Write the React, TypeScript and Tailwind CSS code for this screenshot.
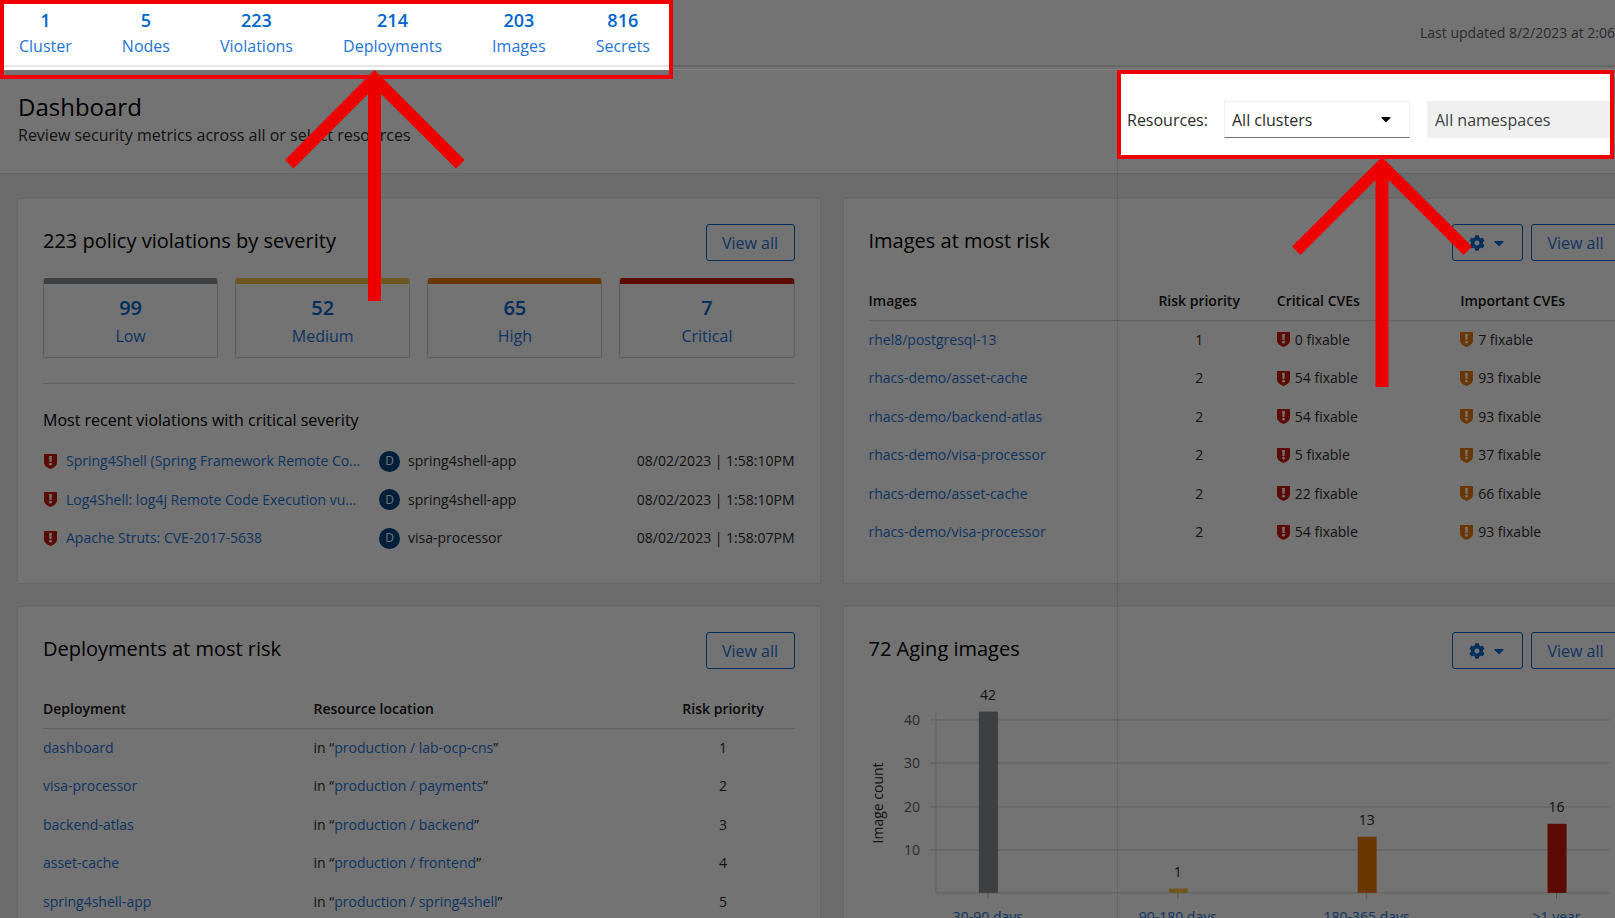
import React from "react";
import { FaCaretDown, FaCog } from "react-icons/fa";

const stats = [
  ["1", "Cluster"],
  ["5", "Nodes"],
  ["223", "Violations"],
  ["214", "Deployments"],
  ["203", "Images"],
  ["816", "Secrets"],
];

const severities = [
  { count: 99, label: "Low", bar: "bg-[#8a8d90]" },
  { count: 52, label: "Medium", bar: "bg-[#f4c145]" },
  { count: 65, label: "High", bar: "bg-[#ec7a08]" },
  { count: 7, label: "Critical", bar: "bg-[#c9190b]" },
];

const violations = [
  { name: "Spring4Shell (Spring Framework Remote Co...", app: "spring4shell-app", time: "08/02/2023 | 1:58:10PM" },
  { name: "Log4Shell: log4j Remote Code Execution vu...", app: "spring4shell-app", time: "08/02/2023 | 1:58:10PM" },
  { name: "Apache Struts: CVE-2017-5638", app: "visa-processor", time: "08/02/2023 | 1:58:07PM" },
];

const images = [
  { name: "rhel8/postgresql-13", priority: 1, critical: 0, important: 7 },
  { name: "rhacs-demo/asset-cache", priority: 2, critical: 54, important: 93 },
  { name: "rhacs-demo/backend-atlas", priority: 2, critical: 54, important: 93 },
  { name: "rhacs-demo/visa-processor", priority: 2, critical: 5, important: 37 },
  { name: "rhacs-demo/asset-cache", priority: 2, critical: 22, important: 66 },
  { name: "rhacs-demo/visa-processor", priority: 2, critical: 54, important: 93 },
];

const deployments = [
  { name: "dashboard", location: "production / lab-ocp-cns" },
  { name: "visa-processor", location: "production / payments" },
  { name: "backend-atlas", location: "production / backend" },
  { name: "asset-cache", location: "production / frontend" },
  { name: "spring4shell-app", location: "production / spring4shell" },
];

const ages = [
  { label: "30-90 days", count: 42, x: 119, fill: "fill-[#8a8d90]" },
  { label: "90-180 days", count: 1, x: 309, fill: "fill-[#f4c145]" },
  { label: "180-365 days", count: 13, x: 498, fill: "fill-[#ec7a08]" },
  { label: ">1 year", count: 16, x: 688, fill: "fill-[#c9190b]" },
];

function Shield({ className }: { className: string }) {
  return (
    <svg viewBox="0 0 13 15" className={`h-[15px] w-[13px] shrink-0 ${className}`} aria-hidden="true">
      <path
        fill="currentColor"
        d="M.6 0h11.8c.3 0 .6.3.6.6v7.9c0 2.9-2.400 4.900-6.500 6.500C2.400 13.400 0 11.400 0 8.500V.6C0 .3.3 0 .6 0z"
      />
      <path fill="#fff" d="M5.100 2h2.800l-.4 6H5.500z" />
      <circle cx="6.500" cy="10.200" r="1.400" fill="#fff" />
    </svg>
  );
}

function ViewAll() {
  return (
    <button type="button" className="h-[37px] w-[89px] rounded-[3px] border border-[#0066cc] text-base text-[#1f75d8]">
      View all
    </button>
  );
}

function OptionsButton() {
  return (
    <button
      type="button"
      aria-label="Options"
      className="flex h-[37px] w-[71px] items-center justify-center gap-[6px] rounded-[3px] border border-[#0066cc] text-base text-[#0066cc]"
    >
      <FaCog />
      <FaCaretDown />
    </button>
  );
}

function Card({ title, options, children }: { title: string; options?: boolean; children: React.ReactNode }) {
  return (
    <section className="min-h-[384px] bg-white p-[25px] shadow-[0_0_2px_rgba(3,3,3,0.15)]">
      <div className="flex items-start justify-between">
        <h2 className="text-xl leading-[34px] font-medium text-black">{title}</h2>
        <div className="flex gap-2">
          {options && <OptionsButton />}
          <ViewAll />
        </div>
      </div>
      {children}
    </section>
  );
}

function Fixable({ count, tone }: { count: number; tone: string }) {
  return (
    <span className="flex items-center gap-[5px]">
      <Shield className={tone} />
      {count} fixable
    </span>
  );
}

function AgingChart() {
  const base = 224;
  const unit = 4.32;
  return (
    <svg viewBox="0 0 752 270" className="block h-auto w-full text-sm" role="img" aria-label="Image count by age">
      {[10, 20, 30, 40].map((v) => {
        const y = Math.round(base - v * unit);
        return (
          <g key={v}>
            <path d={`M61 ${y}H741`} className="stroke-[#d2d2d2]" />
            <text x="51" y={y + 5} textAnchor="end" className="fill-[#5f6265]">
              {v}
            </text>
          </g>
        );
      })}
      <path d={`M67 42V${base}H741`} fill="none" className="stroke-[#d2d2d2]" />
      <text transform="translate(14 134) rotate(-90)" textAnchor="middle" className="fill-[#2b2b2b]">
        Image count
      </text>
      {ages.map((a) => {
        const top = base - a.count * unit;
        return (
          <g key={a.label}>
            <path d={`M${a.x} ${base}v6`} className="stroke-[#b8bbbe]" />
            <rect x={a.x - 9} y={top} width="19" height={a.count * unit} className={a.fill} />
            <text x={a.x} y={top - 12} textAnchor="middle" className="fill-[#2b2b2b]">
              {a.count}
            </text>
            <a href="#aging">
              <text x={a.x} y="253" textAnchor="middle" className="fill-[#1f75d8]">
                {a.label}
              </text>
            </a>
          </g>
        );
      })}
    </svg>
  );
}

export default function App() {
  return (
    <div className="relative h-screen overflow-hidden bg-[#f0f0f0] font-['Open_Sans',sans-serif] text-[#2b2b2b]">
      <header className="flex h-[70px] justify-between bg-white">
        <nav aria-label="Summary" className="relative z-20 flex w-[673px] shrink-0 bg-white">
          <ul className="mb-[3px] flex flex-1 justify-between border-b-2 border-[#e4e4e4] pt-[7px] pr-[23px] pl-[19px]">
            {stats.map(([count, label]) => (
              <li key={label}>
                <a href={`#${label}`} className="block text-center text-base leading-[26px] text-[#1f75d8]">
                  <span className="block text-lg leading-[26px] font-semibold text-[#0066cc]">{count}</span>
                  {label}
                </a>
              </li>
            ))}
          </ul>
          <div className="pointer-events-none absolute inset-x-0 top-0 h-[79px] border-4 border-[#ee0000]" />
        </nav>
        <p className="mb-[3px] flex flex-1 justify-end border-b-2 border-[#e4e4e4] text-sm leading-[65px] whitespace-nowrap text-[#5f6265]">
          Last updated 8/2/2023 at 2:06
        </p>
      </header>

      <div className="flex h-[104px] items-start justify-between border-b border-[#e0e0e0] bg-white pr-px">
        <div className="pt-[19px] pl-[18px]">
          <h1 className="text-2xl leading-9 font-medium text-black">Dashboard</h1>
          <p className="text-base leading-5">Review security metrics across all or select resources</p>
        </div>
        <form className="relative z-20 flex h-[89px] w-[497px] items-center overflow-hidden border-4 border-[#ee0000] bg-white pt-[14px] pb-1 pl-[6px]">
          <label htmlFor="clusters" className="w-[97px] shrink-0 text-base">
            Resources:
          </label>
          <div className="relative mr-[17px] w-[186px] shrink-0">
            <select
              id="clusters"
              className="block h-[37px] w-full appearance-none border border-b-[#6a6e73] border-[#f0f0f0] bg-white px-[7px] text-base"
            >
              <option>All clusters</option>
            </select>
            <FaCaretDown className="pointer-events-none absolute top-[10px] right-4 text-black" />
          </div>
          <select
            disabled
            aria-label="Namespaces"
            className="block h-[37px] flex-1 appearance-none bg-[#f0f0f0] px-2 text-base text-[#3c3f42] opacity-100"
          >
            <option>All namespaces</option>
          </select>
        </form>
      </div>

      <main className="-mr-[54px] grid grid-cols-2 gap-6 py-[25px] pr-6 pl-[18px]">
        <Card title="223 policy violations by severity">
          <ul className="mt-[17px] grid grid-cols-4 gap-[17px]">
            {severities.map((s) => (
              <li key={s.label} className="h-20 overflow-hidden rounded-[3px] border border-t-0 border-[#d2d2d2]">
                <div className={`h-[6px] ${s.bar}`} />
                <a href={`#${s.label}`} className="block pt-[10px] text-center text-base leading-7 text-[#1f75d8]">
                  <span className="block text-xl leading-7 font-semibold text-[#0066cc]">{s.count}</span>
                  {s.label}
                </a>
              </li>
            ))}
          </ul>
          <hr className="mt-[25px] border-[#d2d2d2]" />
          <h3 className="mt-6 mb-[10px] text-base leading-6 font-medium text-black">
            Most recent violations with critical severity
          </h3>
          <ul className="text-sm">
            {violations.map((v) => (
              <li key={v.name} className="flex items-center pl-px odd:h-[38px] even:h-[39px]">
                <Shield className="text-[#c9190b]" />
                <a href="#violation" className="mr-[17px] ml-[9px] w-[296px] whitespace-nowrap text-[#1f75d8]">
                  {v.name}
                </a>
                <span className="mr-2 flex size-[21px] items-center justify-center rounded-full bg-[#004080] text-xs text-white">
                  D
                </span>
                {v.app}
                <time className="ml-auto">{v.time}</time>
              </li>
            ))}
          </ul>
        </Card>

        <Card title="Images at most risk" options>
          <table className="mt-[21px] w-full table-fixed text-left text-sm">
            <thead>
              <tr className="h-[38px] border-b border-[#d2d2d2] text-[#151515]">
                <th className="w-[35%] font-semibold">Images</th>
                <th className="w-[18%] text-center font-semibold">Risk priority</th>
                <th className="w-[24%] pl-[10px] font-semibold">Critical CVEs</th>
                <th className="pl-[13px] font-semibold">Important CVEs</th>
              </tr>
            </thead>
            <tbody>
              {images.map((r, i) => (
                <tr key={i} className="odd:h-[39px] even:h-[38px]">
                  <td>
                    <a href="#image" className="text-[#1f75d8]">
                      {r.name}
                    </a>
                  </td>
                  <td className="text-center">{r.priority}</td>
                  <td className="pl-[10px]">
                    <Fixable count={r.critical} tone="text-[#c9190b]" />
                  </td>
                  <td className="pl-[13px]">
                    <Fixable count={r.important} tone="text-[#ec7a08]" />
                  </td>
                </tr>
              ))}
            </tbody>
          </table>
        </Card>

        <Card title="Deployments at most risk">
          <table className="mt-[21px] w-full table-fixed text-left text-sm">
            <thead>
              <tr className="h-[38px] border-b border-[#d2d2d2] text-[#151515]">
                <th className="w-[36%] font-semibold">Deployment</th>
                <th className="font-semibold">Resource location</th>
                <th className="w-[19%] text-center font-semibold">Risk priority</th>
              </tr>
            </thead>
            <tbody>
              {deployments.map((d, i) => (
                <tr key={d.name} className="odd:h-[39px] even:h-[38px]">
                  <td>
                    <a href="#deployment" className="text-[#1f75d8]">
                      {d.name}
                    </a>
                  </td>
                  <td>
                    in “
                    <a href="#location" className="text-[#1f75d8]">
                      {d.location}
                    </a>
                    ”
                  </td>
                  <td className="text-center">{i + 1}</td>
                </tr>
              ))}
            </tbody>
          </table>
        </Card>

        <Card title="72 Aging images" options>
          <AgingChart />
        </Card>
      </main>

      {/* Dimming layer: only the highlighted areas are stacked above it */}
      <div className="pointer-events-none absolute inset-0 z-10 bg-black/55" />
      <div className="pointer-events-none absolute top-[69px] right-0 left-[673px] z-10 h-px bg-white/10" />
      <div className="pointer-events-none absolute top-[159px] bottom-0 left-[1117px] z-10 w-px bg-black/10" />

      <svg
        viewBox="0 0 180 232"
        className="pointer-events-none absolute top-[70px] left-[285px] z-30 h-[232px] w-[180px] fill-[#ee0000]"
        aria-hidden="true"
      >
        <path d="M89.500 0 179.500 90 171 98.500 96 24V231H83V24L8.500 98.500 0 90z" />
      </svg>
      <svg
        viewBox="0 0 180 230"
        className="pointer-events-none absolute top-[157px] left-[1292px] z-30 h-[230px] w-[180px] fill-[#ee0000]"
        aria-hidden="true"
      >
        <path d="M90 0 180 89.500 171.500 98 96.500 23V230H83.500V23L8.500 98 0 89.500z" />
      </svg>
    </div>
  );
}
